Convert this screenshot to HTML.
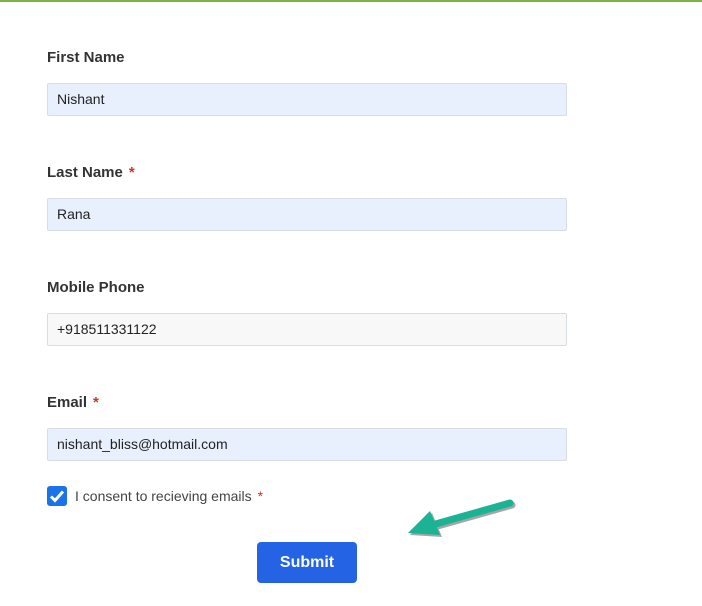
<!DOCTYPE html>
<html><head><style>
body{margin:0;width:702px;height:606px;background:#fff;font-family:"Liberation Sans",sans-serif;position:relative;overflow:hidden}
.top{position:absolute;left:0;top:0;width:702px;height:2px;background:#7cb342}
.lab{position:absolute;left:47px;font-size:15px;font-weight:bold;color:#333}
.lab span{color:#c0392b;margin-left:6px}
.in{position:absolute;left:47px;border:1px solid #d8dce3;border-radius:2px;background:#e8f0fe;font-size:14px;color:#222;line-height:31px;padding-left:9px;box-sizing:border-box;width:520px;height:33px}
.cb{position:absolute;left:47px;top:486px;width:20px;height:20px;background:#1a73e8;border-radius:3px}
.ct{position:absolute;left:75px;top:488px;font-size:14px;color:#444}
.ct span{color:#c0392b;margin-left:6px}
.btn{position:absolute;left:257px;top:542px;width:100px;height:41px;background:#2563e5;border-radius:4px;color:#fff;font-weight:bold;font-size:16px;text-align:center;line-height:41px}
</style></head><body>
<div class="top"></div>
<div class="lab" style="top:49px">First Name</div>
<div class="in" style="top:83px">Nishant</div>
<div class="lab" style="top:164px">Last Name<span>*</span></div>
<div class="in" style="top:198px">Rana</div>
<div class="lab" style="top:279px">Mobile Phone</div>
<div class="in" style="top:313px;background:#f8f8f8">+918511331122</div>
<div class="lab" style="top:394px">Email<span>*</span></div>
<div class="in" style="top:428px">nishant_bliss@hotmail.com</div>
<div class="cb"><svg width="20" height="20"><path d="M4 10.5l4 4 8-9" stroke="#fff" stroke-width="3" fill="none"/></svg></div>
<div class="ct">I consent to recieving emails<span>*</span></div>
<svg style="position:absolute;left:400px;top:495px" width="125" height="50">
<g transform="translate(2,2)" opacity="0.35"><path d="M110 8L32 30" stroke="#000" stroke-width="7" stroke-linecap="round"/><path d="M8 38l22-22 10 24z" fill="#000"/></g>
<path d="M110 8L32 30" stroke="#1ab394" stroke-width="7" stroke-linecap="round"/>
<path d="M8 38l22-22 10 24z" fill="#1ab394"/>
</svg>
<div class="btn">Submit</div>
</body></html>
